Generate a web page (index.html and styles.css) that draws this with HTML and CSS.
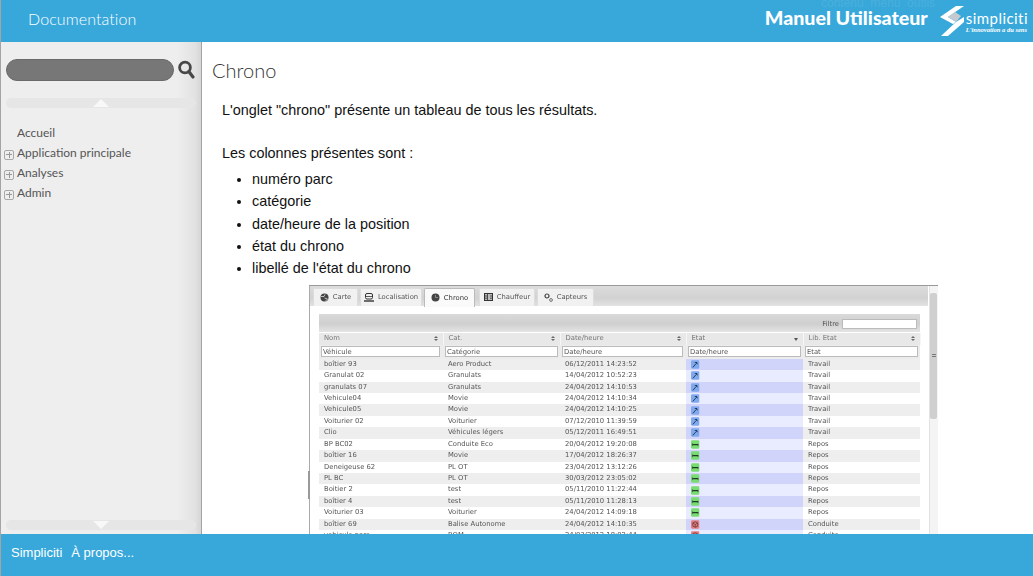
FILE: index.html
```html
<!DOCTYPE html>
<html lang="fr">
<head>
  <meta charset="UTF-8" />
  <meta name="viewport" content="width=device-width, initial-scale=1.0" />
  <title>Documentation - Chrono</title>
  <link rel="stylesheet" href="styles.css">
</head>
<body>
  <svg class="defs" width="0" height="0">
    <symbol id="i-work" viewBox="0 0 9 9">
      <rect width="9" height="9" rx="1.5" fill="#7fa9ee"/>
      <path d="M2 7.5 5 4" stroke="#1c2c48" stroke-width=".9" fill="none"/>
      <path d="M3.5 2.2 6.2 1.8 7.4 4.4 5.8 3.6z" fill="#1c2c48"/>
    </symbol>
    <symbol id="i-rest" viewBox="0 0 9 9">
      <rect width="9" height="9" rx="1.5" fill="#79dc72"/>
      <path d="M1.5 4.7h6" stroke="#1d3d22" stroke-width="1.3"/>
      <path d="M1.5 3.2v3M7.5 3.8v2.4" stroke="#1d3d22" stroke-width=".6"/>
    </symbol>
    <symbol id="i-drive" viewBox="0 0 9 9">
      <rect width="9" height="9" rx="1.5" fill="#e57d7e"/>
      <circle cx="4.5" cy="4.5" r="2.8" fill="none" stroke="#5a3030" stroke-width=".8"/>
      <path d="M4.5 4.5V7.3M4.5 4.5 2 3M4.5 4.5 7 3" stroke="#5a3030" stroke-width=".7"/>
    </symbol>
  </svg>

  <div class="page">
    <header class="topbar">
      <div class="topbar-title">Documentation</div>
      <div class="ghost-links">contenu&nbsp; menu&nbsp; outils</div>
      <div class="brand">
        <span class="brand-name">Manuel Utilisateur</span>
        <svg class="brand-mark" width="24" height="30" viewBox="0 0 24 30">
          <path d="M16 0h8L8 11l8 5-3 2L0 11z" fill="#fff"/>
          <path d="M8 11l7-5 6 4-5 6z" fill="#c4cad0"/>
          <path d="M16 16l8-5v5L8 30H1z" fill="#fff"/>
        </svg>
        <div class="brand-text">
          <span class="brand-word">simpliciti</span>
          <span class="brand-tag">L'innovation a du sens</span>
        </div>
      </div>
    </header>

    <div class="middle">
      <aside class="sidebar">
        <div class="search">
          <div class="search-input"></div>
          <svg width="17" height="20" viewBox="0 0 17 20">
            <circle cx="7" cy="7.5" r="5.4" fill="none" stroke="#484848" stroke-width="2.8"/>
            <path d="M10.8 11.5 15 17" stroke="#484848" stroke-width="3.2" stroke-linecap="round"/>
          </svg>
        </div>
        <div class="scroll-btn"><span class="arrow-up"></span></div>
        <ul class="menu">
          <li><span class="plus none"></span>Accueil</li>
          <li><span class="plus"></span>Application principale</li>
          <li><span class="plus"></span>Analyses</li>
          <li><span class="plus"></span>Admin</li>
        </ul>
        <div class="scroll-btn"><span class="arrow-down"></span></div>
      </aside>

      <main class="content">
        <h1>Chrono</h1>
        <div class="article">
          <p class="intro">L'onglet "chrono" présente un tableau de tous les résultats.</p>
          <p class="lead">Les colonnes présentes sont :</p>
          <ul class="cols">
            <li>numéro parc</li>
            <li>catégorie</li>
            <li>date/heure de la position</li>
            <li>état du chrono</li>
            <li>libellé de l'état du chrono</li>
          </ul>
        </div>

        <div class="shot">
          <div class="shot-main">
            <div class="tabs">
              <div class="tab tab-1">
                <svg width="9" height="9" viewBox="0 0 9 9"><circle cx="4.5" cy="4.5" r="4" fill="#444"/><path d="M1 3.5h3l1-2M4.5 5l3 1-2 2" stroke="#ddd" stroke-width=".8" fill="none"/></svg>
                Carte
              </div>
              <div class="tab tab-2">
                <svg width="10" height="9" viewBox="0 0 10 9"><rect x="1.5" y=".5" width="7" height="5.5" rx="1.5" fill="none" stroke="#333"/><path d="M0 8h10" stroke="#333" stroke-width="1.4"/><path d="M2 3.5h6" stroke="#333" stroke-width=".8"/></svg>
                Localisation
              </div>
              <div class="tab tab-3 active">
                <svg width="9" height="9" viewBox="0 0 9 9"><circle cx="4.5" cy="4.5" r="4" fill="#444"/><path d="M4.5 2v2.5H7" stroke="#aaa" stroke-width=".7" fill="none"/></svg>
                Chrono
              </div>
              <div class="tab tab-4">
                <svg width="9" height="8" viewBox="0 0 9 8"><rect x=".5" y=".5" width="8" height="7" fill="#bbb" stroke="#333"/><path d="M3.5 0v8M0 3h3.5M0 5.2h3.5M6 3h3M6 5.2h3" stroke="#333" stroke-width=".8"/></svg>
                Chauffeur
              </div>
              <div class="tab tab-5">
                <svg width="9" height="9" viewBox="0 0 9 9"><circle cx="3" cy="3" r="2" fill="none" stroke="#444" stroke-width="1.2"/><circle cx="7" cy="7" r="1.4" fill="none" stroke="#666" stroke-width=".9"/></svg>
                Capteurs
              </div>
            </div>
            <div class="panel">
              <div class="filter-bar">Filtre <span class="fake-input filter-input"></span></div>
              <table class="grid-table">
                <colgroup>
                  <col class="c1"><col class="c2"><col class="c3"><col class="c4"><col class="c5">
                </colgroup>
                <thead>
                  <tr class="head">
                    <th>Nom<i class="sort"></i></th><th>Cat.<i class="sort"></i></th><th>Date/heure<i class="sort"></i></th><th>Etat<i class="sort-down"></i></th><th>Lib. Etat<i class="sort"></i></th>
                  </tr>
                  <tr class="inputs">
                    <td><span class="fake-input">Véhicule</span></td>
                    <td><span class="fake-input">Catégorie</span></td>
                    <td><span class="fake-input">Date/heure</span></td>
                    <td><span class="fake-input">Date/heure</span></td>
                    <td><span class="fake-input">Etat</span></td>
                  </tr>
                </thead>
                <tbody>
                  <tr><td>boîtier 93</td><td>Aero Product</td><td>06/12/2011 14:23:52</td><td class="state"><svg><use href="#i-work"/></svg></td><td>Travail</td></tr>
                  <tr><td>Granulat 02</td><td>Granulats</td><td>14/04/2012 10:52:23</td><td class="state"><svg><use href="#i-work"/></svg></td><td>Travail</td></tr>
                  <tr><td>granulats 07</td><td>Granulats</td><td>24/04/2012 14:10:53</td><td class="state"><svg><use href="#i-work"/></svg></td><td>Travail</td></tr>
                  <tr><td>Vehicule04</td><td>Movie</td><td>24/04/2012 14:10:34</td><td class="state"><svg><use href="#i-work"/></svg></td><td>Travail</td></tr>
                  <tr><td>Vehicule05</td><td>Movie</td><td>24/04/2012 14:10:25</td><td class="state"><svg><use href="#i-work"/></svg></td><td>Travail</td></tr>
                  <tr><td>Voiturier 02</td><td>Voiturier</td><td>07/12/2010 11:39:59</td><td class="state"><svg><use href="#i-work"/></svg></td><td>Travail</td></tr>
                  <tr><td>Clio</td><td>Véhicules légers</td><td>05/12/2011 16:49:51</td><td class="state"><svg><use href="#i-work"/></svg></td><td>Travail</td></tr>
                  <tr><td>BP BC02</td><td>Conduite Eco</td><td>20/04/2012 19:20:08</td><td class="state"><svg><use href="#i-rest"/></svg></td><td>Repos</td></tr>
                  <tr><td>boîtier 16</td><td>Movie</td><td>17/04/2012 18:26:37</td><td class="state"><svg><use href="#i-rest"/></svg></td><td>Repos</td></tr>
                  <tr><td>Deneigeuse 62</td><td>PL OT</td><td>23/04/2012 13:12:26</td><td class="state"><svg><use href="#i-rest"/></svg></td><td>Repos</td></tr>
                  <tr><td>PL BC</td><td>PL OT</td><td>30/03/2012 23:05:02</td><td class="state"><svg><use href="#i-rest"/></svg></td><td>Repos</td></tr>
                  <tr><td>Boitier 2</td><td>test</td><td>05/11/2010 11:22:44</td><td class="state"><svg><use href="#i-rest"/></svg></td><td>Repos</td></tr>
                  <tr><td>boîtier 4</td><td>test</td><td>05/11/2010 11:28:13</td><td class="state"><svg><use href="#i-rest"/></svg></td><td>Repos</td></tr>
                  <tr><td>Voiturier 03</td><td>Voiturier</td><td>24/04/2012 14:09:18</td><td class="state"><svg><use href="#i-rest"/></svg></td><td>Repos</td></tr>
                  <tr><td>boîtier 69</td><td>Balise Autonome</td><td>24/04/2012 14:10:35</td><td class="state"><svg><use href="#i-drive"/></svg></td><td>Conduite</td></tr>
                  <tr><td>vehicule parc</td><td>BOM</td><td>24/03/2012 18:02:44</td><td class="state"><svg><use href="#i-drive"/></svg></td><td>Conduite</td></tr>
                </tbody>
              </table>
            </div>
          </div>
          <div class="shot-scroll">
            <div class="shot-thumb"><span></span></div>
          </div>
        </div>
      </main>
    </div>

    <footer class="bottombar">
      <span>Simpliciti</span>
      <span>À propos...</span>
    </footer>
  </div>
</body>
</html>
```

FILE: styles.css
```css
* {
  box-sizing: border-box;
}
html, body {
  margin: 0;
  height: 100%;
  overflow: hidden;
}
body {
  font-family: "Liberation Sans", Arial, sans-serif;
  background: #fff;
}
.defs {
  position: absolute;
}
.page {
  display: flex;
  flex-direction: column;
  height: 576px;
  border-left: 1px solid #a4a4a4;
  border-right: 1px solid #d8d8d8;
}

/* header */
.topbar {
  flex: none;
  height: 42px;
  background: #38a8db;
  display: flex;
  align-items: center;
  position: relative;
  color: #fff;
}
.topbar-title {
  margin-left: 27px;
  font-family: Lato, sans-serif;
  font-weight: 300;
  font-size: 16px;
  letter-spacing: .1px;
  margin-top: -6px;
}
.ghost-links {
  position: absolute;
  left: 820px;
  top: -1px;
  font-size: 12px;
  line-height: 9px;
  color: #4bafdc;
  white-space: nowrap;
}
.brand {
  margin-left: auto;
  display: flex;
  align-items: center;
  margin-right: 5px;
}
.brand-name {
  font-family: Lato, sans-serif;
  font-weight: 900;
  font-size: 19.6px;
  line-height: 16px;
  margin: 0 12px 7px 0;
}
.brand-mark {
  flex: none;
  margin-right: 2px;
}
.brand-text {
  display: flex;
  flex-direction: column;
  margin-top: 1px;
}
.brand-word {
  font-family: Lato, sans-serif;
  font-weight: 400;
  font-size: 15px;
  letter-spacing: .45px;
  line-height: 16px;
}
.brand-tag {
  font-family: "Liberation Serif", serif;
  font-style: italic;
  font-weight: 700;
  font-size: 6.5px;
  line-height: 8px;
  white-space: nowrap;
}

/* sidebar */
.middle {
  flex: 1;
  display: flex;
  min-height: 0;
}
.sidebar {
  flex: none;
  width: 201px;
  display: flex;
  flex-direction: column;
  padding: 17px 5px 4px 5px;
  background: linear-gradient(to right, #eee 0, #eee 88%, #e2e2e2 97%, #d6d6d6 100%);
  border-right: 1px solid #a4a4a4;
}
.search {
  display: flex;
  align-items: center;
  gap: 4px;
  height: 22px;
}
.search-input {
  width: 168px;
  height: 22px;
  border-radius: 11px;
  background: #777;
  border: 1px solid #6a6a6a;
}
.scroll-btn {
  height: 10px;
  width: 190px;
  border-radius: 5px;
  background: #e6e6e6;
  display: flex;
  justify-content: center;
  flex: none;
}
.sidebar .scroll-btn:nth-child(2) {
  margin-top: 17px;
}
.arrow-up, .arrow-down {
  width: 0;
  height: 0;
  border-left: 8px solid transparent;
  border-right: 8px solid transparent;
}
.arrow-up {
  border-bottom: 8px solid #f8f8f8;
  margin-top: 1px;
}
.arrow-down {
  border-top: 8px solid #f8f8f8;
  margin-top: 1px;
}
.menu {
  list-style: none;
  margin: 15px 0 0 -2px;
  padding: 0;
  flex: 1;
  font-family: Lato, sans-serif;
  font-size: 12px;
  color: #555;
}
.menu li {
  height: 20px;
  line-height: 20px;
  display: flex;
  align-items: center;
}
.plus {
  width: 10px;
  height: 10px;
  margin: 3px 3px 0 0;
  flex: none;
  border: 1px solid #a8a8a8;
  border-radius: 2px;
  background:
    linear-gradient(#999, #999) center / 6px 1px no-repeat,
    linear-gradient(#999, #999) center / 1px 6px no-repeat;
}
.plus.none {
  visibility: hidden;
}

/* content */
.content {
  flex: 1;
  min-width: 0;
  overflow: hidden;
  padding: 15px 0 0 10px;
  color: #111;
}
h1 {
  margin: 0;
  font-family: Lato, sans-serif;
  font-weight: 300;
  font-size: 20px;
  line-height: 26px;
  color: #333;
}
.article {
  padding-left: 10px;
  font-size: 14.4px;
  line-height: 22.4px;
}
.article p {
  margin: 0;
}
.intro {
  margin-top: 16px !important;
}
.lead {
  margin-top: 21px !important;
}
.cols {
  margin: 3px 0 0;
  padding-left: 30px;
}

/* the embedded capture of the application */
.shot {
  margin: 5px 0 0 97px;
  width: 629px;
  display: flex;
  border-top: 1px solid #999;
  border-left: 1px solid #aaa;
  position: relative;
  filter: blur(.3px);
  font-family: "DejaVu Sans", Verdana, sans-serif;
  font-size: 6.8px;
  color: #555;
}
.shot::before {
  content: "";
  position: absolute;
  left: -2px;
  top: 185px;
  width: 2px;
  height: 28px;
  background: #999;
}
.shot-main {
  flex: 1;
  min-width: 0;
}
.tabs {
  height: 20px;
  display: flex;
  padding: 2px 0 0 3px;
  background: linear-gradient(#dcdcdc, #d2d2d2 60%, #e2e2e2);
}
.tab {
  height: 18px;
  display: flex;
  align-items: center;
  justify-content: center;
  gap: 4px;
  margin-right: 2px;
  background: #f1f1f1;
  border: 1px solid #ddd;
  border-bottom: 0;
  border-radius: 2px 2px 0 0;
}
.tab.active {
  background: #fafafa;
  height: 19px;
  color: #333;
  border-color: #bbb;
}
.tab-1 { width: 45px; }
.tab-2 { width: 62px; }
.tab-3 { width: 51px; }
.tab-4 { width: 56px; margin-left: 2px; }
.tab-5 { width: 57px; }
.panel {
  background: #fff;
  height: 400px;
  padding: 8px 8px 0 9px;
}
.filter-bar {
  height: 18px;
  width: 601px;
  display: flex;
  align-items: center;
  justify-content: flex-end;
  gap: 3px;
  padding: 2px 3px 0 0;
  background: linear-gradient(#dadada, #cfcfcf 55%, #e4e4e4);
  color: #555;
}
.filter-input {
  width: 75px !important;
  height: 10px !important;
}
.grid-table {
  width: 601px;
  border-collapse: collapse;
  table-layout: fixed;
  margin-top: 1px;
}
.c1 { width: 124px; }
.c2 { width: 117px; }
.c3 { width: 126px; }
.c4 { width: 117px; }
.c5 { width: 117px; }
.grid-table td, .grid-table th {
  padding: 0 0 0 5px;
  height: 11.4px;
  line-height: 11.4px;
  white-space: nowrap;
  overflow: hidden;
  font-weight: 400;
  text-align: left;
}
.head th {
  height: 12px;
  background: #e8e8e8;
  border-right: 1px solid #f6f6f6;
  color: #777;
  position: relative;
}
.sort, .sort-down {
  position: absolute;
  right: 5px;
  top: 3px;
  width: 0;
  height: 0;
  border-left: 2px solid transparent;
  border-right: 2px solid transparent;
}
.sort {
  border-bottom: 2.5px solid #666;
}
.sort::after {
  content: "";
  position: absolute;
  left: -2px;
  top: 3.5px;
  border-left: 2px solid transparent;
  border-right: 2px solid transparent;
  border-top: 2.5px solid #666;
}
.sort-down {
  top: 5px;
  border-top: 3px solid #555;
}
.inputs td {
  height: 14px;
  padding: 0 0 0 2px;
  background: #ececec;
}
.fake-input {
  display: block;
  width: 119px;
  height: 11px;
  line-height: 10px;
  background: #fff;
  border: 1px solid #bbb;
  padding-left: 1px;
  color: #555;
}
.inputs td:nth-child(2) .fake-input { width: 113px; }
.inputs td:nth-child(3) .fake-input { width: 121px; }
.inputs td:nth-child(4) .fake-input { width: 113px; }
.inputs td:nth-child(5) .fake-input { width: 113px; }
tbody tr:nth-child(odd) td { background: #eee; }
tbody tr:nth-child(even) td { background: #fff; }
tbody tr:nth-child(odd) td.state { background: #d0d4fb; }
tbody tr:nth-child(even) td.state { background: #e9ebfe; }
td.state {
  padding-left: 5px !important;
  line-height: 0 !important;
}
td.state svg {
  width: 8.5px;
  height: 9px;
  display: block;
}
.shot-scroll {
  flex: none;
  width: 9px;
  margin-left: 1px;
  padding: 7px 1px 0 0;
  background: #f4f4f4;
  border-left: 1px solid #e2e2e2;
}
.shot-thumb {
  height: 126px;
  background: #cfcfcf;
  border-radius: 2px;
  display: flex;
  align-items: center;
  justify-content: center;
}
.shot-thumb span {
  width: 4px;
  height: 3px;
  border-top: 1px solid #777;
  border-bottom: 1px solid #777;
}

/* footer */
.bottombar {
  flex: none;
  height: 42px;
  background: #38a8db;
  color: #fff;
  font-size: 13px;
  display: flex;
  align-items: center;
  gap: 9px;
  padding: 0 0 5px 10px;
  position: relative;
}
```
